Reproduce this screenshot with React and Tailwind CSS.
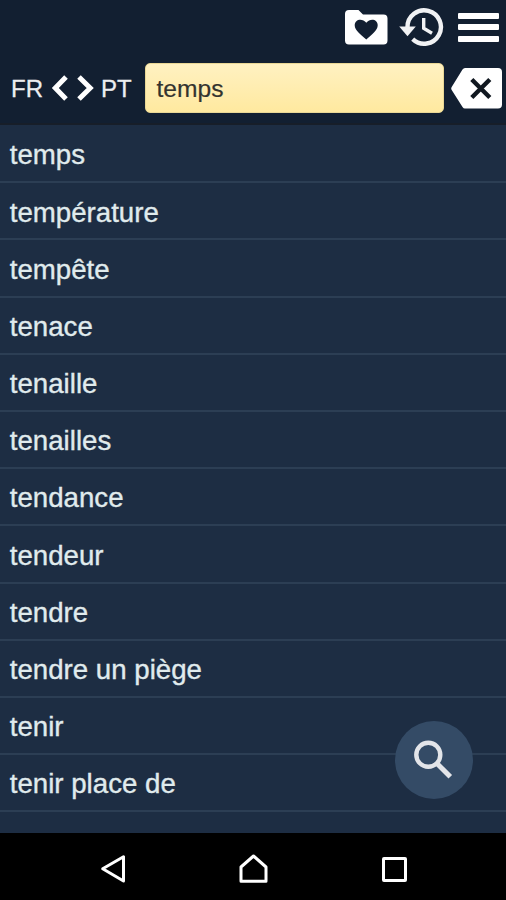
const words = [
  "temps", "température", "tempête", "tenace", "tenaille", "tenailles",
  "tendance", "tendeur", "tendre", "tendre un piège", "tenir", "tenir place de",
];

function FolderHeart() {
  return (
    <svg className="h-[36px] w-[44px]" viewBox="0 0 44 36">
      <path fill="#fff" d="M5 1H14.5L19 5.5H39.5Q43.5 5.5 43.5 9.5V31.500Q43.500 35.500 39.500 35.500H5Q1 35.500 1 31.500V5Q1 1 5 1Z" />
      <path fill="#121f31" d="M22.3 30.500C17 25.500 10.700 21.500 10.700 16.200C10.700 10 18.500 8.700 22.300 13.800C26.100 8.700 33.700 10 33.700 16.200C33.700 21.500 27.500 25.500 22.300 30.500Z" />
    </svg>
  );
}

function History() {
  return (
    <svg className="ml-[11px] h-[40px] w-[46px]" viewBox="0 0 46 40">
      <path fill="none" stroke="#f1f2f4" strokeWidth="4.400" d="M8.500 20A16.700 16.700 0 1 1 13.700 32.100" />
      <path fill="#f1f2f4" d="M.2 19.500H16.800L8.500 29.200Z" />
      <path fill="none" stroke="#f1f2f4" strokeWidth="3.400" d="M24.700 11V21.300L33 26.200" />
    </svg>
  );
}

function Menu() {
  return (
    <div className="ml-[13px] flex w-[41px] flex-col gap-[5.500px]">
      <div className="h-[6px] rounded-[1px] bg-white" />
      <div className="h-[6px] rounded-[1px] bg-white" />
      <div className="h-[6px] rounded-[1px] bg-white" />
    </div>
  );
}

export default function App() {
  return (
    <div className="relative flex h-[900px] w-[506px] flex-col overflow-hidden bg-[#1d2d43] font-['Liberation_Sans',Arial,sans-serif]">
      <header className="h-[125px] shrink-0 border-b-2 border-[#171e29] bg-[#121f31]">
        <div className="flex h-[54px] items-center justify-end pr-[7px]">
          <FolderHeart />
          <History />
          <Menu />
        </div>
        <div className="flex h-[68px] items-center pl-[11px] text-[#eceef0]">
          <span className="w-[40px] pt-px text-[24px] [-webkit-text-stroke:0.3px_#eceef0]">FR</span>
          <svg className="h-[28px] w-[44px]" viewBox="0 0 44 28">
            <path fill="none" stroke="#fff" strokeWidth="5" d="M15 3L4.300 14L15 25M28 3L39.200 14L28 25" />
          </svg>
          <span className="ml-[6px] w-[43px] pt-px text-[24px] [-webkit-text-stroke:0.3px_#eceef0]">PT</span>
          <div className="ml-[0.500px] flex h-[50px] w-[299px] items-center rounded-[5px] border border-[#e9d795] bg-linear-to-b from-[#fff1c1] to-[#ffe99f] pt-[2px] pl-[11px] text-[24.600px] text-[#33332f] [-webkit-text-stroke:0.2px_#33332f]">
            temps
          </div>
          <svg className="ml-[7px] h-[41px] w-[52px] shrink-0" viewBox="0 0 52 41">
            <path fill="#fff" d="M14 0H47Q51 0 51 4V36.500Q51 40.500 47 40.500H14Q12.500 40.500 11.500 39L.7 22Q-.3 20.500 .7 19L11.500 1.500Q12.500 0 14 0Z" />
            <path fill="none" stroke="#111820" strokeWidth="4.400" d="M20.800 11.500L38.800 29.500M38.800 11.500L20.800 29.500" />
          </svg>
        </div>
      </header>
      <ul className="h-[708px] shrink-0 overflow-hidden pt-px">
        {words.map((word) => (
          <li key={word} className="flex h-[57.200px] items-center border-b-2 border-[#2c3e54] pt-[3px] pl-[9.800px] text-[27.650px] text-[#e0ebed] [-webkit-text-stroke:0.35px_#e0ebed]">
            {word}
          </li>
        ))}
      </ul>
      <button className="absolute top-[720.500px] left-[395px] flex size-[78px] items-center justify-center rounded-full bg-[#344b66]">
        <svg className="size-[40px]" viewBox="0 0 40 40">
          <circle cx="14.300" cy="14.800" r="12" fill="none" stroke="#e3e5e9" strokeWidth="4.400" />
          <path stroke="#e3e5e9" strokeWidth="5" d="M23.500 24L36.300 36.800" />
        </svg>
      </button>
      <nav className="flex h-[67px] shrink-0 items-center bg-black pt-[4px] pl-[100px]">
        <svg className="h-[30px] w-[26px]" viewBox="0 0 26 30">
          <path fill="none" stroke="#fff" strokeWidth="3" strokeLinejoin="round" d="M23.500 2.800V27L2.700 14.800Z" />
        </svg>
        <svg className="ml-[112px] h-[30px] w-[30px]" viewBox="0 0 30 30">
          <path fill="none" stroke="#fff" strokeWidth="3" strokeLinejoin="round" d="M3 27.200V13L15.500 2L28 13V27.200Z" />
        </svg>
        <div className="mt-px ml-[114px] size-[25px] rounded-[2px] border-[3px] border-white" />
      </nav>
    </div>
  );
}
